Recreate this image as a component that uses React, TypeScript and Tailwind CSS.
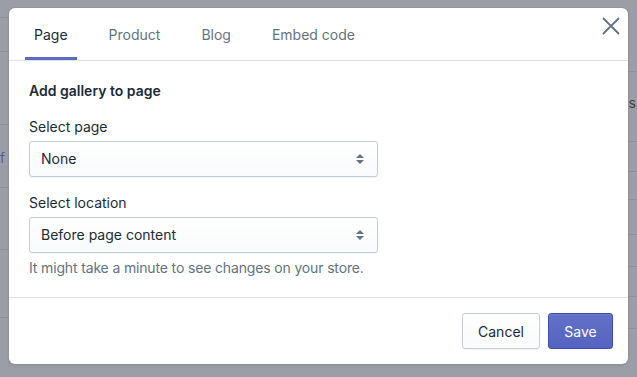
import React from "react";

const tabs = ["Page", "Product", "Blog", "Embed code"];

function SelectBox({ value }: { value: string }) {
  return (
    <div className="flex h-[36px] w-[349px] items-center justify-between rounded-[3px] border border-[#c4cdd5] bg-gradient-to-b from-white to-[#f9fafb] pl-[11px] pr-[12px] shadow-[0_1px_0_rgba(22,29,37,0.05)]">
      <span className="text-[14px] leading-[20px] text-[#212b36]">{value}</span>
      <svg width="10" height="14" viewBox="0 0 10 14">
        <path d="M5 2 L9 6 H1 Z" fill="#637381" />
        <path d="M5 12 L9 8 H1 Z" fill="#637381" />
      </svg>
    </div>
  );
}

export default function App() {
  return (
    <main
      className="relative h-[377px] w-[637px] overflow-hidden bg-[#9b9ea6]"
      style={{ fontFamily: "Inter, 'Noto Sans', sans-serif" }}
    >
      {/* page behind the overlay */}
      <div className="flex h-full">
        <div className="flex w-[9px] flex-col">
          <div className="h-[18px] border-b border-[#8e9199]" />
          <div className="h-[34px] border-b border-[#8e9199]" />
          <div className="h-[73px] border-b border-[#8e9199]" />
          <div className="h-[63px] border-b border-[#8e9199]" />
          <div className="h-[62px] border-b border-[#8e9199]" />
          <div className="h-[68px] border-b border-[#8e9199]" />
        </div>
        <div className="flex-1" />
        <div className="flex w-[9px] flex-col">
          <div className="h-[72px] border-b border-[#8e9199]" />
          <div className="h-[70px] border-b border-[#8e9199]" />
          <div className="h-[30px] border-b border-[#8e9199]" />
          <div className="h-[28px] border-b border-[#8e9199]" />
          <div className="h-[35px] border-b border-[#8e9199]" />
          <div className="h-[32px] border-b border-[#8e9199]" />
          <div className="h-[30px] border-b border-[#8e9199]" />
          <div className="h-[32px] border-b border-[#8e9199]" />
        </div>
      </div>
      <span className="absolute left-[0px] top-[149px] text-[13px] text-[#4c5aa8]">f</span>
      <span className="absolute right-[1px] top-[92px] text-[14px] text-[#3f444b]">Actions</span>

      {/* modal */}
      <div className="absolute left-[9px] top-[8px] flex h-[356px] w-[619px] flex-col rounded-[6px] bg-white shadow-[0_0_0_1px_rgba(63,63,68,0.05),0_1px_3px_rgba(63,63,68,0.15)]">
        <div className="relative flex h-[53px] items-end border-b border-[#dfe3e8] pl-[16px]">
          <div className="flex gap-[23px]">
            {tabs.map((t, i) => (
              <div
                key={t}
                className={
                  i === 0
                    ? "flex h-[52px] items-center border-b-[3px] border-[#5c6ac4] px-[9px] pt-[3px] text-[14px] text-[#212b36]"
                    : "flex h-[52px] items-center border-b-[3px] border-transparent px-[9px] pt-[3px] text-[14px] text-[#637381]"
                }
              >
                {t}
              </div>
            ))}
          </div>
          <button className="absolute right-[8px] top-[9px] flex h-[18px] w-[18px] items-center justify-center">
            <svg width="18" height="18" viewBox="0 0 18 18">
              <path d="M1.5 1.5 L16.5 16.5 M16.5 1.5 L1.5 16.5" stroke="#637381" strokeWidth="1.8" strokeLinecap="round" />
            </svg>
          </button>
        </div>

        <div className="flex flex-col px-[20px] pt-[20px]">
          <h2 className="text-[14px] font-semibold leading-[20px] text-[#212b36]">Add gallery to page</h2>
          <label className="mt-[16px] text-[14px] leading-[20px] text-[#212b36]">Select page</label>
          <div className="mt-[4px]">
            <SelectBox value="None" />
          </div>
          <label className="mt-[16px] text-[14px] leading-[20px] text-[#212b36]">Select location</label>
          <div className="mt-[4px]">
            <SelectBox value="Before page content" />
          </div>
          <p className="mt-[5px] text-[14px] leading-[20px] tracking-[-0.15px] text-[#637381]">
            It might take a minute to see changes on your store.
          </p>
        </div>

        <div className="mt-auto flex h-[67px] items-center justify-end gap-[8px] border-t border-[#dfe3e8] px-[15px]">
          <button className="h-[36px] w-[78px] rounded-[3px] border border-[#c4cdd5] bg-gradient-to-b from-white to-[#f9fafb] text-[14px] text-[#212b36] shadow-[0_1px_0_rgba(22,29,37,0.05)]">
            Cancel
          </button>
          <button className="h-[36px] w-[65px] rounded-[3px] border border-[#3f4eae] bg-gradient-to-b from-[#6371c7] to-[#5563c1] text-[14px] text-white shadow-[inset_0_1px_0_0_#6f7bcb]">
            Save
          </button>
        </div>
      </div>
    </main>
  );
}
